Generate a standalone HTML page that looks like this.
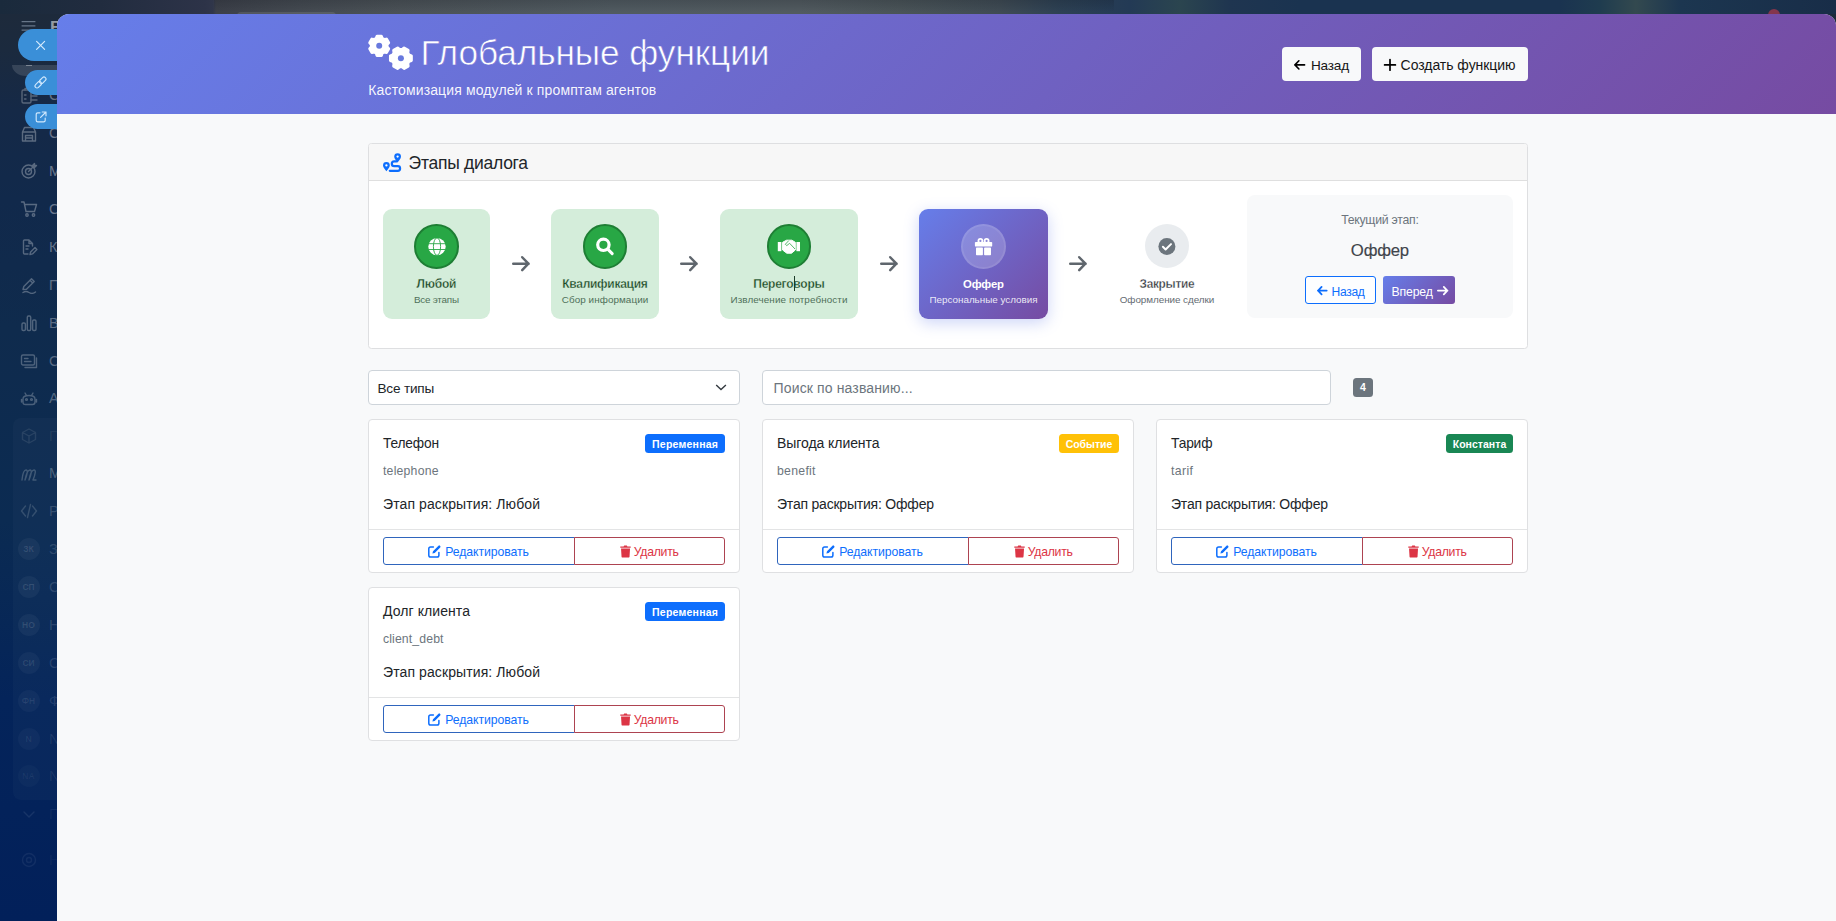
<!DOCTYPE html>
<html lang="ru">
<head>
<meta charset="utf-8">
<title>Глобальные функции</title>
<style>
*{box-sizing:border-box;margin:0;padding:0}
html,body{width:1836px;height:921px;overflow:hidden}
body{position:relative;font-family:"Liberation Sans",sans-serif;font-size:14px;color:#212529;
background:linear-gradient(180deg,#1e2a3a 0px,#1b2a3e 50px,#152947 110px,#11294b 200px,#0f2b4d 330px,#0b2b52 520px,#04245a 700px,#02205a 921px)}
.abs{position:absolute;white-space:nowrap;line-height:1}
#topglow{position:absolute;left:0;top:0;width:1836px;height:14px;background:linear-gradient(90deg,#1a2a3c 0,#212c3f 100px,#2d3348 205px,#30364a 213px,#3c4049 216px,#444a51 300px,#4b5257 400px,#515b61 612px,#525b60 800px,#4a5458 900px,#3f4b54 1000px,#2d4154 1060px,#233a55 1130px,#2b454f 1180px,#1f3550 1230px,#1a3350 1300px,#1a3350 1560px,#1f3c4f 1600px,#33494f 1636px,#1c3650 1680px,#182d48 1836px)}
#panel{position:absolute;left:57px;top:14px;width:1779px;height:907px;background:#f8f9fa;border-radius:12px 12px 0 0;overflow:hidden}
#hdr{position:absolute;left:0;top:0;width:1779px;height:100px;background:linear-gradient(135deg,#667eea 0%,#764ba2 100%)}
</style>
</head>
<body>
<div id="topglow"></div>
<div class="abs" style="left:214px;top:0px;width:900px;height:14px;background:linear-gradient(180deg,rgba(10,14,22,.17) 0,rgba(10,14,22,.09) 6px,rgba(10,14,22,0) 12px)"></div>
<div class="abs" style="left:237px;top:11.5px;width:99px;height:6px;border-radius:4px 4px 0 0;background:rgba(255,255,255,.10)"></div>
<div class="abs" style="left:1767.5px;top:9.3px;width:12px;height:12px;border-radius:50%;background:#a8384c;opacity:.75"></div>
<svg class="abs" style="left:20px;top:18px;" width="18" height="16" viewBox="20 18 18 16"><path d="M21.6 21.6H35.4M21.6 25.9H35.4M21.6 30.2H35.4" stroke="#cfe0f2" stroke-opacity=".42" stroke-width="1.3" fill="none"/></svg>
<span class="abs" style="left:50.00px;top:19.00px;font-size:17px;font-weight:700;color:rgba(255,255,255,.55);">Б</span>
<div class="abs" style="left:11.5px;top:65px;width:60px;height:11px;border-radius:0 0 0 14px/0 0 0 11px;background:rgba(255,255,255,.13)"></div>
<div class="abs" style="left:26px;top:65px;width:6px;height:1px;background:rgba(255,255,255,.35)"></div>
<svg class="abs" style="left:19.5px;top:86.5px;opacity:0.28" width="18" height="18" viewBox="0 0 18 18"><rect x="2" y="3" width="9" height="13" rx="1.5" stroke="#fff" fill="none" stroke-width="1.4" stroke-linecap="round" stroke-linejoin="round"/><path d="M5 3V1.5H8V3M4.5 8H6M4.5 12H6M11 9H17M11 13H17M14 5H17" stroke="#fff" fill="none" stroke-width="1.4" stroke-linecap="round" stroke-linejoin="round"/></svg>
<span class="abs" style="left:49.00px;top:88.00px;font-size:14.5px;color:rgba(255,255,255,0.36);">С</span>
<svg class="abs" style="left:19.5px;top:124.5px;opacity:0.3" width="18" height="18" viewBox="0 0 18 18"><path d="M2.5 16V7L4.5 2.5H13.5L15.5 7V16ZM2.5 7H15.5M5.5 16V10.5H12.5V16M5.5 13H12.5" stroke="#fff" fill="none" stroke-width="1.4" stroke-linecap="round" stroke-linejoin="round"/></svg>
<span class="abs" style="left:49.00px;top:126.00px;font-size:14.5px;color:rgba(255,255,255,0.38);">С</span>
<svg class="abs" style="left:19.5px;top:162px;opacity:0.3" width="18" height="18" viewBox="0 0 18 18"><circle cx="8.5" cy="9.5" r="6.5" stroke="#fff" fill="none" stroke-width="1.4" stroke-linecap="round" stroke-linejoin="round"/><circle cx="8.5" cy="9.5" r="3" stroke="#fff" fill="none" stroke-width="1.4" stroke-linecap="round" stroke-linejoin="round"/><path d="M8.5 9.5L14.5 3.5M12.5 3.5L14.5 1.5V3.5H16.5L14.5 5.5" stroke="#fff" fill="none" stroke-width="1.4" stroke-linecap="round" stroke-linejoin="round"/></svg>
<span class="abs" style="left:49.00px;top:164.00px;font-size:14.5px;color:rgba(255,255,255,0.38);">М</span>
<svg class="abs" style="left:19.5px;top:200px;opacity:0.3" width="18" height="18" viewBox="0 0 18 18"><path d="M1.5 2H4L6 11.5H14.5L16.5 4.5H4.6" stroke="#fff" fill="none" stroke-width="1.4" stroke-linecap="round" stroke-linejoin="round"/><circle cx="7" cy="15" r="1.2" stroke="#fff" fill="none" stroke-width="1.4" stroke-linecap="round" stroke-linejoin="round"/><circle cx="13.5" cy="15" r="1.2" stroke="#fff" fill="none" stroke-width="1.4" stroke-linecap="round" stroke-linejoin="round"/></svg>
<span class="abs" style="left:49.00px;top:202.00px;font-size:14.5px;color:rgba(255,255,255,0.38);">С</span>
<svg class="abs" style="left:19.5px;top:237.5px;opacity:0.29" width="18" height="18" viewBox="0 0 18 18"><path d="M12.5 8V5.5L9 2H4.5Q3.5 2 3.5 3V15Q3.5 16 4.5 16H8M9 2V5.5H12.5M6 8H9M6 11H8" stroke="#fff" fill="none" stroke-width="1.4" stroke-linecap="round" stroke-linejoin="round"/><path d="M10 16.5L10.6 14L15 9.6L16.9 11.5L12.5 15.9Z" stroke="#fff" fill="none" stroke-width="1.4" stroke-linecap="round" stroke-linejoin="round"/></svg>
<span class="abs" style="left:49.00px;top:240.00px;font-size:14.5px;color:rgba(255,255,255,0.36);">К</span>
<svg class="abs" style="left:19.5px;top:276px;opacity:0.28" width="18" height="18" viewBox="0 0 18 18"><path d="M3 13.5L3.8 10.5L11.5 2.8L14.2 5.5L6.5 13.2ZM10 4.3L12.7 7" stroke="#fff" fill="none" stroke-width="1.4" stroke-linecap="round" stroke-linejoin="round"/><path d="M3 16.5Q6 14.5 9 16.5T15.5 16" stroke="#fff" fill="none" stroke-width="1.4" stroke-linecap="round" stroke-linejoin="round"/></svg>
<span class="abs" style="left:49.00px;top:278.00px;font-size:14.5px;color:rgba(255,255,255,0.34);">П</span>
<svg class="abs" style="left:19.5px;top:314px;opacity:0.27" width="18" height="18" viewBox="0 0 18 18"><rect x="2" y="9" width="3.4" height="7.5" rx="1.2" stroke="#fff" fill="none" stroke-width="1.4" stroke-linecap="round" stroke-linejoin="round"/><rect x="7.3" y="2" width="3.4" height="14.5" rx="1.2" stroke="#fff" fill="none" stroke-width="1.4" stroke-linecap="round" stroke-linejoin="round"/><rect x="12.6" y="6" width="3.4" height="10.5" rx="1.2" stroke="#fff" fill="none" stroke-width="1.4" stroke-linecap="round" stroke-linejoin="round"/></svg>
<span class="abs" style="left:49.00px;top:316.00px;font-size:14.5px;color:rgba(255,255,255,0.33);">В</span>
<svg class="abs" style="left:19.5px;top:351.5px;opacity:0.26" width="18" height="18" viewBox="0 0 18 18"><rect x="1.5" y="3" width="13" height="10" rx="1.5" stroke="#fff" fill="none" stroke-width="1.4" stroke-linecap="round" stroke-linejoin="round"/><path d="M4.5 6.5H8M4.5 9.5H11M16.5 6V15.5H5" stroke="#fff" fill="none" stroke-width="1.4" stroke-linecap="round" stroke-linejoin="round"/></svg>
<span class="abs" style="left:49.00px;top:354.00px;font-size:14.5px;color:rgba(255,255,255,0.31);">С</span>
<svg class="abs" style="left:19.5px;top:389px;opacity:0.25" width="18" height="18" viewBox="0 0 18 18"><path d="M3 10Q3 6.5 9 6.5T15 10V13Q15 15.5 12.5 15.5H5.5Q3 15.5 3 13ZM5 4L6.5 6.5M13 4L11.5 6.5M1.5 10.5V13M16.5 10.5V13" stroke="#fff" fill="none" stroke-width="1.4" stroke-linecap="round" stroke-linejoin="round"/><circle cx="6.5" cy="10.5" r=".9" stroke="#fff" fill="none" stroke-width="1.4" stroke-linecap="round" stroke-linejoin="round"/><circle cx="11.5" cy="10.5" r=".9" stroke="#fff" fill="none" stroke-width="1.4" stroke-linecap="round" stroke-linejoin="round"/></svg>
<span class="abs" style="left:49.00px;top:391.00px;font-size:14.5px;color:rgba(255,255,255,0.3);">А</span>
<svg class="abs" style="left:19.5px;top:427px;opacity:0.09" width="18" height="18" viewBox="0 0 18 18"><path d="M9 2L15.5 5.5V12.5L9 16L2.5 12.5V5.5ZM2.5 5.5L9 9L15.5 5.5M9 9V16" stroke="#fff" fill="none" stroke-width="1.4" stroke-linecap="round" stroke-linejoin="round"/></svg>
<span class="abs" style="left:49.00px;top:429.00px;font-size:14.5px;color:rgba(255,255,255,0.07);">П</span>
<svg class="abs" style="left:19.5px;top:464.5px;opacity:0.2" width="18" height="18" viewBox="0 0 18 18"><path d="M2 15Q3 5 6 5T5 15Q7 5 10 5T9 15Q11 5 14 5T13 15H16" stroke="#fff" fill="none" stroke-width="1.4" stroke-linecap="round" stroke-linejoin="round"/></svg>
<span class="abs" style="left:49.00px;top:466.00px;font-size:14.5px;color:rgba(255,255,255,0.26);">М</span>
<svg class="abs" style="left:19.5px;top:502px;opacity:0.15" width="18" height="18" viewBox="0 0 18 18"><path d="M5.5 4L1.5 9L5.5 14M12.5 4L16.5 9L12.5 14M10.5 2.5L7.5 15.5" stroke="#fff" fill="none" stroke-width="1.4" stroke-linecap="round" stroke-linejoin="round"/></svg>
<span class="abs" style="left:49.00px;top:504.00px;font-size:14.5px;color:rgba(255,255,255,0.18);">Р</span>
<div class="abs" style="left:13px;top:418px;width:50px;height:382px;background:rgba(255,255,255,.022);border-radius:8px 0 0 8px"></div>
<div class="abs" style="left:17.5px;top:538px;width:22px;height:22px;border-radius:50%;background:rgba(255,255,255,0.045)"></div>
<span class="abs" style="left:23.24px;top:545.00px;font-size:8.5px;font-weight:700;color:rgba(255,255,255,0.13);">ЗК</span>
<span class="abs" style="left:49.00px;top:542.00px;font-size:14.5px;color:rgba(255,255,255,0.15);">З</span>
<div class="abs" style="left:17.5px;top:576px;width:22px;height:22px;border-radius:50%;background:rgba(255,255,255,0.045)"></div>
<span class="abs" style="left:22.38px;top:583.00px;font-size:8.5px;font-weight:700;color:rgba(255,255,255,0.13);">СП</span>
<span class="abs" style="left:49.00px;top:580.00px;font-size:14.5px;color:rgba(255,255,255,0.15);">С</span>
<div class="abs" style="left:17.5px;top:614px;width:22px;height:22px;border-radius:50%;background:rgba(255,255,255,0.045)"></div>
<span class="abs" style="left:22.12px;top:621.00px;font-size:8.5px;font-weight:700;color:rgba(255,255,255,0.13);">НО</span>
<span class="abs" style="left:49.00px;top:618.00px;font-size:14.5px;color:rgba(255,255,255,0.15);">Н</span>
<div class="abs" style="left:17.5px;top:652px;width:22px;height:22px;border-radius:50%;background:rgba(255,255,255,0.04)"></div>
<span class="abs" style="left:22.38px;top:659.00px;font-size:8.5px;font-weight:700;color:rgba(255,255,255,0.11);">СИ</span>
<span class="abs" style="left:49.00px;top:656.00px;font-size:14.5px;color:rgba(255,255,255,0.13);">С</span>
<div class="abs" style="left:17.5px;top:690px;width:22px;height:22px;border-radius:50%;background:rgba(255,255,255,0.035)"></div>
<span class="abs" style="left:21.80px;top:697.00px;font-size:8.5px;font-weight:700;color:rgba(255,255,255,0.09);">ФН</span>
<span class="abs" style="left:49.00px;top:694.00px;font-size:14.5px;color:rgba(255,255,255,0.11);">Ф</span>
<div class="abs" style="left:17.5px;top:727.5px;width:22px;height:22px;border-radius:50%;background:rgba(255,255,255,0.03)"></div>
<span class="abs" style="left:25.43px;top:735.00px;font-size:8.5px;font-weight:700;color:rgba(255,255,255,0.07);">N</span>
<span class="abs" style="left:49.00px;top:732.00px;font-size:14.5px;color:rgba(255,255,255,0.09);">N</span>
<div class="abs" style="left:17.5px;top:765px;width:22px;height:22px;border-radius:50%;background:rgba(255,255,255,0.025)"></div>
<span class="abs" style="left:22.36px;top:772.00px;font-size:8.5px;font-weight:700;color:rgba(255,255,255,0.06);">NA</span>
<span class="abs" style="left:49.00px;top:769.00px;font-size:14.5px;color:rgba(255,255,255,0.08);">N</span>
<svg class="abs" style="left:19.5px;top:805px;opacity:.08" width="18" height="18" viewBox="0 0 18 18"><path d="M4 7L9 12L14 7" stroke="#fff" fill="none" stroke-width="1.4" stroke-linecap="round" stroke-linejoin="round"/></svg>
<span class="abs" style="left:49.00px;top:807.00px;font-size:14.5px;color:rgba(255,255,255,.06);">П</span>
<svg class="abs" style="left:19.5px;top:851px;opacity:.06" width="18" height="18" viewBox="0 0 18 18"><circle cx="9" cy="9" r="6.5" stroke="#fff" fill="none" stroke-width="1.4" stroke-linecap="round" stroke-linejoin="round"/><circle cx="9" cy="9" r="2.5" stroke="#fff" fill="none" stroke-width="1.4" stroke-linecap="round" stroke-linejoin="round"/></svg>
<span class="abs" style="left:49.00px;top:853.00px;font-size:14.5px;color:rgba(255,255,255,.05);">Н</span>
<div class="abs" style="left:18px;top:29px;width:50px;height:32px;border-radius:16px 0 0 16px;background:#3a8fd8"></div>
<svg class="abs" style="left:34.5px;top:40px;" width="11" height="11" viewBox="0 0 11 11"><path d="M1.6 1.3L9.6 9.3M9.6 1.3L1.6 9.3" stroke="#dff0ff" stroke-width="1.15" fill="none" stroke-linecap="round" opacity=".95"/></svg>
<div class="abs" style="left:25px;top:70px;width:45px;height:25px;border-radius:12.5px 0 0 12.5px;background:#3a8fd8"></div>
<svg class="abs" style="left:34px;top:76px;" width="13" height="13" viewBox="0 0 13 13"><g transform="rotate(-45 6.5 6.5)" fill="none" stroke="#d9edff" stroke-width="1.15" opacity=".95"><rect x="-0.4" y="4.5" width="7.4" height="4" rx="2"/><rect x="6" y="4.5" width="7.4" height="4" rx="2"/></g></svg>
<div class="abs" style="left:25px;top:104px;width:45px;height:25px;border-radius:12.5px 0 0 12.5px;background:#3a8fd8"></div>
<svg class="abs" style="left:35px;top:111px;" width="12" height="12" viewBox="0 0 12 12"><path d="M5 1.8H2.8Q1.2 1.8 1.2 3.4V9.2Q1.2 10.8 2.8 10.8H8.6Q10.2 10.8 10.2 9.2V7M7.2 1H11V4.8M11 1L5.6 6.4" fill="none" stroke="#d9edff" stroke-width="1.15" stroke-linecap="round" stroke-linejoin="round" opacity=".95"/></svg>
<div id="panel"><div id="hdr"></div></div>
<svg class="abs" style="left:360px;top:25px;" width="70" height="60" viewBox="360 25 70 60"><path d="M382.14 53.24L381.36 55.46L377.04 55.46L376.26 53.24L374.23 52.07L371.91 52.50L369.75 48.76L371.29 46.97L371.29 44.63L369.75 42.84L371.91 39.10L374.23 39.53L376.26 38.36L377.04 36.14L381.36 36.14L382.14 38.36L384.17 39.53L386.49 39.10L388.65 42.84L387.11 44.63L387.11 46.97L388.65 48.76L386.49 52.50L384.17 52.07Z" fill="#fff" stroke="#fff" stroke-width="3" stroke-linejoin="round"/><circle cx="379.2" cy="45.8" r="3.0" fill="#6879de"/><path d="M408.99 55.00L411.34 55.87L411.34 60.53L408.99 61.40L407.72 63.60L408.14 66.08L404.10 68.41L402.17 66.81L399.63 66.81L397.70 68.41L393.66 66.08L394.08 63.60L392.81 61.40L390.46 60.53L390.46 55.87L392.81 55.00L394.08 52.80L393.66 50.32L397.70 47.99L399.63 49.59L402.17 49.59L404.10 47.99L408.14 50.32L407.72 52.80Z" fill="#fff" stroke="#fff" stroke-width="3" stroke-linejoin="round"/><circle cx="400.9" cy="58.2" r="3.0" fill="#6879de"/></svg>
<span class="abs" style="left:420.50px;top:35.00px;font-size:35.26px;color:#fff;letter-spacing:-0.088px;-webkit-text-stroke:.6px rgb(107,111,213);">Глобальные функции</span>
<span class="abs" style="left:368.30px;top:83.00px;font-size:14px;color:rgba(255,255,255,.95);letter-spacing:0.129px;">Кастомизация модулей к промптам агентов</span>
<div class="abs" style="left:1282px;top:47px;width:79px;height:34px;border-radius:4px;background:#f8f9fa"></div>
<svg class="abs" style="left:1291.8px;top:57.6px;" width="15.400000000000091" height="13.8" viewBox="0 0 15.400000000000091 13.8"><path d="M12.60 6.90H2.80M6.90 2.80L2.96 6.90L6.90 11.00" fill="none" stroke="#000" stroke-width="1.6" stroke-linecap="round" stroke-linejoin="round"/></svg>
<span class="abs" style="left:1310.90px;top:59.00px;font-size:13.6px;color:#161616;letter-spacing:-0.188px;">Назад</span>
<div class="abs" style="left:1372px;top:47px;width:156px;height:34px;border-radius:4px;background:#f8f9fa"></div>
<svg class="abs" style="left:1383px;top:58px;" width="14" height="14" viewBox="0 0 14 14"><path d="M7 1.6V12.2M1.6 6.9H12.4" stroke="#000" stroke-width="1.7" stroke-linecap="round" fill="none"/></svg>
<span class="abs" style="left:1400.60px;top:58.00px;font-size:14px;color:#161616;letter-spacing:-0.047px;">Создать функцию</span>
<div class="abs" style="left:368px;top:143px;width:1160px;height:206px;background:#fff;border:1px solid #dedfe1;border-radius:3.5px"></div>
<div class="abs" style="left:369px;top:144px;width:1158px;height:37px;background:#f7f7f7;border-bottom:1px solid #dfdfdf;border-radius:3px 3px 0 0"></div>
<svg class="abs" style="left:382px;top:152px;" width="20" height="20" viewBox="382 152 20 20"><path d="M386.4 171.2C385.4 169.6 383 167.6 383 165.5A3.4 3.4 0 0 1 389.8 165.5C389.8 167.6 387.4 169.6 386.4 171.2Z" fill="#0d6efd"/><circle cx="386.4" cy="165.4" r="1.15" fill="#fff"/><path d="M397.6 162.4C396.6 160.8 394.2 158.8 394.2 156.7A3.4 3.4 0 0 1 401 156.7C401 158.8 398.6 160.8 397.6 162.4Z" fill="#0d6efd"/><circle cx="397.6" cy="156.6" r="1.15" fill="#fff"/><path d="M396.6 161.4H394.2A2.4 2.4 0 0 0 394.2 166.2H397.8A2.3 2.3 0 0 1 397.8 170.8H389.8" fill="none" stroke="#0d6efd" stroke-width="2.2" stroke-linecap="round"/></svg>
<span class="abs" style="left:408.60px;top:155.00px;font-size:17.5px;color:#212529;letter-spacing:-0.262px;">Этапы диалога</span>
<div class="abs" style="left:383px;top:209px;width:107px;height:110px;background:#d4edda;border-radius:9px"></div>
<div class="abs" style="left:414.2px;top:224px;width:44.6px;height:44.6px;border-radius:50%;background:#28a745;border:2px solid #1e7e34"></div>
<span class="abs" style="left:416.50px;top:278.00px;font-size:12.03px;font-weight:700;color:#1c4526;letter-spacing:-0.172px;-webkit-text-stroke:.3px #d4edda;">Любой</span>
<span class="abs" style="left:414.00px;top:295.00px;font-size:9.9px;color:#4f7059;letter-spacing:-0.242px;">Все этапы</span>
<div class="abs" style="left:551px;top:209px;width:108px;height:110px;background:#d4edda;border-radius:9px"></div>
<div class="abs" style="left:582.7px;top:224px;width:44.6px;height:44.6px;border-radius:50%;background:#28a745;border:2px solid #1e7e34"></div>
<span class="abs" style="left:562.25px;top:278.00px;font-size:12.03px;font-weight:700;color:#1c4526;letter-spacing:-0.287px;-webkit-text-stroke:.3px #d4edda;">Квалификация</span>
<span class="abs" style="left:561.75px;top:295.00px;font-size:9.9px;color:#4f7059;letter-spacing:0.067px;">Сбор информации</span>
<div class="abs" style="left:720px;top:209px;width:138px;height:110px;background:#d4edda;border-radius:9px"></div>
<div class="abs" style="left:766.7px;top:224px;width:44.6px;height:44.6px;border-radius:50%;background:#28a745;border:2px solid #1e7e34"></div>
<span class="abs" style="left:753.25px;top:278.00px;font-size:12.03px;font-weight:700;color:#1c4526;letter-spacing:-0.245px;-webkit-text-stroke:.3px #d4edda;">Переговоры</span>
<span class="abs" style="left:730.51px;top:295.00px;font-size:9.9px;color:#4f7059;letter-spacing:0.094px;">Извлечение потребности</span>
<div class="abs" style="left:919px;top:209px;width:129px;height:110px;background:linear-gradient(135deg,#667eea 0%,#764ba2 100%);border-radius:9px;box-shadow:0 4px 15px rgba(102,126,234,.33)"></div>
<div class="abs" style="left:961.0px;top:224px;width:45px;height:45px;border-radius:50%;background:rgba(255,255,255,.2);border:2px solid rgba(255,255,255,.08)"></div>
<span class="abs" style="left:963.00px;top:279.00px;font-size:11.32px;font-weight:700;color:#fff;letter-spacing:-0.164px;">Оффер</span>
<span class="abs" style="left:929.50px;top:295.00px;font-size:9.9px;color:rgba(255,255,255,.88);letter-spacing:-0.026px;">Персональные условия</span>
<div class="abs" style="left:1145px;top:224.2px;width:44px;height:44px;border-radius:50%;background:#e9ecef"></div>
<span class="abs" style="left:1139.50px;top:279.00px;font-size:11.85px;font-weight:700;color:#33373b;letter-spacing:-0.279px;-webkit-text-stroke:.3px #fff;">Закрытие</span>
<span class="abs" style="left:1119.75px;top:295.00px;font-size:9.9px;color:#646b72;letter-spacing:-0.062px;">Оформление сделки</span>
<div class="abs" style="left:794px;top:275.5px;width:1px;height:15px;background:#1c3b28"></div>
<svg class="abs" style="left:509.7px;top:254.3px;" width="21.900000000000034" height="19.4" viewBox="0 0 21.900000000000034 19.4"><path d="M3.25 9.70H18.65M12.20 3.25L18.40 9.70L12.20 16.15" fill="none" stroke="#5f666d" stroke-width="2.5" stroke-linecap="round" stroke-linejoin="round"/></svg>
<svg class="abs" style="left:678.3px;top:254.3px;" width="21.899999999999977" height="19.4" viewBox="0 0 21.899999999999977 19.4"><path d="M3.25 9.70H18.65M12.20 3.25L18.40 9.70L12.20 16.15" fill="none" stroke="#5f666d" stroke-width="2.5" stroke-linecap="round" stroke-linejoin="round"/></svg>
<svg class="abs" style="left:877.5px;top:254.3px;" width="21.899999999999977" height="19.4" viewBox="0 0 21.899999999999977 19.4"><path d="M3.25 9.70H18.65M12.20 3.25L18.40 9.70L12.20 16.15" fill="none" stroke="#5f666d" stroke-width="2.5" stroke-linecap="round" stroke-linejoin="round"/></svg>
<svg class="abs" style="left:1067.2px;top:254.3px;" width="21.90000000000009" height="19.4" viewBox="0 0 21.90000000000009 19.4"><path d="M3.25 9.70H18.65M12.20 3.25L18.40 9.70L12.20 16.15" fill="none" stroke="#5f666d" stroke-width="2.5" stroke-linecap="round" stroke-linejoin="round"/></svg>
<svg class="abs" style="left:427px;top:237px;" width="20" height="20" viewBox="427 237 20 20"><circle cx="437" cy="246.6" r="8.7" fill="#fff"/><g fill="none" stroke="#28a745" stroke-width=".9"><ellipse cx="437" cy="246.6" rx="3.6" ry="8.7"/><path d="M428.3 243.7H445.7M428.3 249.5H445.7"/></g></svg>
<svg class="abs" style="left:594px;top:235px;" width="22" height="22" viewBox="594 235 22 22"><circle cx="603.4" cy="244.8" r="5.7" fill="none" stroke="#fff" stroke-width="3.2"/><path d="M608.2 249.6L612.2 253.6" stroke="#fff" stroke-width="3" stroke-linecap="round"/></svg>
<svg class="abs" style="left:776px;top:236px;" width="26" height="20" viewBox="776 236 26 20"><rect x="777.8" y="242" width="3.6" height="9.2" fill="#fff"/><rect x="796.4" y="242" width="3.6" height="9.2" fill="#fff"/><path d="M782.6 242.3L786.6 240.2H791.8L795.3 242.3V250L791.5 253.2H786.8L782.6 250Z" fill="#fff" stroke="#fff" stroke-width="1" stroke-linejoin="round"/><path d="M788.8 240.6L785.3 244.3L786.8 245.6L789.6 243.3L795 249" fill="none" stroke="#28a745" stroke-width=".8"/></svg>
<svg class="abs" style="left:973px;top:236px;" width="22" height="22" viewBox="973 236 22 22"><circle cx="980.4" cy="240.9" r="2.0" fill="none" stroke="#fff" stroke-width="1.8"/><circle cx="986.6" cy="240.9" r="2.0" fill="none" stroke="#fff" stroke-width="1.8"/><rect x="974.9" y="241.9" width="17.3" height="4.7" rx=".9" fill="#fff"/><rect x="976" y="247.6" width="6.9" height="7.7" rx=".7" fill="#fff"/><rect x="984.1" y="247.6" width="6.9" height="7.7" rx=".7" fill="#fff"/></svg>
<svg class="abs" style="left:1157px;top:237px;" width="20" height="20" viewBox="1157 237 20 20"><circle cx="1166.9" cy="246.5" r="8.5" fill="#6c757d"/><path d="M1162.9 246.8L1165.6 249.5L1171 244.1" fill="none" stroke="#fff" stroke-width="2" stroke-linecap="round" stroke-linejoin="round"/></svg>
<div class="abs" style="left:1247px;top:195px;width:266px;height:123px;background:#f8f9fa;border-radius:8px"></div>
<span class="abs" style="left:1341.15px;top:214.00px;font-size:12.25px;color:#6c757d;letter-spacing:-0.25px;">Текущий этап:</span>
<span class="abs" style="left:1350.85px;top:243.00px;font-size:16.73px;color:#3f444a;letter-spacing:-0.206px;-webkit-text-stroke:.15px #3f444a;">Оффер</span>
<div class="abs" style="left:1305px;top:276px;width:71px;height:28px;border:1px solid #0d6efd;border-radius:3px;background:#fdfeff"></div>
<svg class="abs" style="left:1314.6px;top:284.29999999999995px;" width="14.600000000000136" height="13.2" viewBox="0 0 14.600000000000136 13.2"><path d="M11.70 6.60H2.90M6.60 2.90L3.08 6.60L6.60 10.30" fill="none" stroke="#0d6efd" stroke-width="1.8" stroke-linecap="round" stroke-linejoin="round"/></svg>
<span class="abs" style="left:1331.50px;top:286.00px;font-size:12.07px;color:#0d6efd;letter-spacing:-0.291px;">Назад</span>
<div class="abs" style="left:1383px;top:276px;width:72px;height:28px;border-radius:3px;background:linear-gradient(135deg,#667eea 0%,#764ba2 100%)"></div>
<span class="abs" style="left:1391.50px;top:286.00px;font-size:12.25px;color:#fff;letter-spacing:-0.145px;">Вперед</span>
<svg class="abs" style="left:1434.6px;top:284.29999999999995px;" width="15.400000000000091" height="13.2" viewBox="0 0 15.400000000000091 13.2"><path d="M2.90 6.60H12.50M8.80 2.90L12.32 6.60L8.80 10.30" fill="none" stroke="#fff" stroke-width="1.8" stroke-linecap="round" stroke-linejoin="round"/></svg>
<div class="abs" style="left:368px;top:370px;width:372px;height:35px;background:#fff;border:1px solid #ced4da;border-radius:4px"></div>
<span class="abs" style="left:377.50px;top:382.00px;font-size:13.58px;color:#212529;letter-spacing:-0.185px;">Все типы</span>
<svg class="abs" style="left:714px;top:383px;" width="14" height="9" viewBox="714 383 14 9"><path d="M716.2 385.1L721 389.6L725.9 385.1" fill="none" stroke="#343a40" stroke-width="1.4" stroke-linecap="butt" stroke-linejoin="miter"/></svg>
<div class="abs" style="left:762px;top:370px;width:569px;height:35px;background:#fff;border:1px solid #ced4da;border-radius:4px"></div>
<span class="abs" style="left:773.60px;top:381.00px;font-size:14px;color:#6c757d;letter-spacing:0.131px;">Поиск по названию...</span>
<div class="abs" style="left:1353px;top:378.4px;width:20px;height:18.2px;background:#6c757d;border-radius:3.5px"></div>
<span class="abs" style="left:1360.08px;top:382.00px;font-size:10.5px;font-weight:700;color:#fff;">4</span>
<div class="abs" style="left:368px;top:419px;width:372px;height:154px;background:#fff;border:1px solid #dfe0e2;border-radius:4px"></div>
<div class="abs" style="left:369px;top:529px;width:370px;height:1px;background:#e3e4e5"></div>
<span class="abs" style="left:383.00px;top:437.00px;font-size:13.79px;color:#212529;letter-spacing:-0.195px;">Телефон</span>
<div class="abs" style="left:645px;top:433.7px;width:80px;height:19px;background:#0d6efd;border-radius:3.5px"></div>
<span class="abs" style="left:652.00px;top:439.00px;font-size:10.5px;font-weight:700;color:#fff;letter-spacing:0.248px;">Переменная</span>
<span class="abs" style="left:383.00px;top:465.00px;font-size:12.25px;color:#6c757d;letter-spacing:0.209px;">telephone</span>
<span class="abs" style="left:383.00px;top:497.00px;font-size:14px;color:#212529;letter-spacing:0.098px;">Этап раскрытия: Любой</span>
<div class="abs" style="left:383px;top:537px;width:192px;height:28px;border:1px solid #2f65bd;border-radius:3px 0 0 3px;background:#fff"></div>
<div class="abs" style="left:574px;top:537px;width:151px;height:28px;border:1px solid #ad4351;border-radius:0 3px 3px 0;background:#fff"></div>
<svg class="abs" style="left:427.2px;top:543.8px;" width="15" height="15" viewBox="-1 -1 15 15"><path d="M5.4 1.9H2.6Q.8 1.9 .8 3.7V10.2Q.8 12 2.6 12H9.1Q10.9 12 10.9 10.2V7.6" fill="none" stroke="#0d6efd" stroke-width="1.5" stroke-linecap="round"/><path d="M4.4 8.6L5 6.2L10.5 .7Q11.2 0 11.9 .7L12.2 1Q12.9 1.7 12.2 2.4L6.7 7.9Z" fill="#0d6efd"/></svg>
<span class="abs" style="left:445.20px;top:546.00px;font-size:12.25px;color:#0d6efd;letter-spacing:-0.085px;">Редактировать</span>
<svg class="abs" style="left:619.6px;top:544.6px;" width="12" height="13" viewBox="0 0 12 13"><path d="M.3 1.5H3.6L4.2 .5H6.8L7.4 1.5H10.7V2.8H.3Z" fill="#dc3545"/><path d="M1 3.6H10L9.5 11.4Q9.4 12.6 8.2 12.6H2.8Q1.6 12.6 1.5 11.4Z" fill="#dc3545"/></svg>
<span class="abs" style="left:633.80px;top:546.00px;font-size:12.25px;color:#dc3545;letter-spacing:-0.28px;">Удалить</span>
<div class="abs" style="left:762px;top:419px;width:372px;height:154px;background:#fff;border:1px solid #dfe0e2;border-radius:4px"></div>
<div class="abs" style="left:763px;top:529px;width:370px;height:1px;background:#e3e4e5"></div>
<span class="abs" style="left:777.00px;top:436.00px;font-size:14px;color:#212529;letter-spacing:-0.066px;">Выгода клиента</span>
<div class="abs" style="left:1059px;top:433.7px;width:60px;height:19px;background:#ffc107;border-radius:3.5px"></div>
<span class="abs" style="left:1065.75px;top:439.00px;font-size:10.5px;font-weight:700;color:#fff;letter-spacing:-0.065px;">Событие</span>
<span class="abs" style="left:777.00px;top:465.00px;font-size:12.25px;color:#6c757d;letter-spacing:0.286px;">benefit</span>
<span class="abs" style="left:777.00px;top:497.00px;font-size:14px;color:#212529;letter-spacing:-0.211px;">Этап раскрытия: Оффер</span>
<div class="abs" style="left:777px;top:537px;width:192px;height:28px;border:1px solid #2f65bd;border-radius:3px 0 0 3px;background:#fff"></div>
<div class="abs" style="left:968px;top:537px;width:151px;height:28px;border:1px solid #ad4351;border-radius:0 3px 3px 0;background:#fff"></div>
<svg class="abs" style="left:821.2px;top:543.8px;" width="15" height="15" viewBox="-1 -1 15 15"><path d="M5.4 1.9H2.6Q.8 1.9 .8 3.7V10.2Q.8 12 2.6 12H9.1Q10.9 12 10.9 10.2V7.6" fill="none" stroke="#0d6efd" stroke-width="1.5" stroke-linecap="round"/><path d="M4.4 8.6L5 6.2L10.5 .7Q11.2 0 11.9 .7L12.2 1Q12.9 1.7 12.2 2.4L6.7 7.9Z" fill="#0d6efd"/></svg>
<span class="abs" style="left:839.20px;top:546.00px;font-size:12.25px;color:#0d6efd;letter-spacing:-0.085px;">Редактировать</span>
<svg class="abs" style="left:1013.6px;top:544.6px;" width="12" height="13" viewBox="0 0 12 13"><path d="M.3 1.5H3.6L4.2 .5H6.8L7.4 1.5H10.7V2.8H.3Z" fill="#dc3545"/><path d="M1 3.6H10L9.5 11.4Q9.4 12.6 8.2 12.6H2.8Q1.6 12.6 1.5 11.4Z" fill="#dc3545"/></svg>
<span class="abs" style="left:1027.80px;top:546.00px;font-size:12.25px;color:#dc3545;letter-spacing:-0.28px;">Удалить</span>
<div class="abs" style="left:1156px;top:419px;width:372px;height:154px;background:#fff;border:1px solid #dfe0e2;border-radius:4px"></div>
<div class="abs" style="left:1157px;top:529px;width:370px;height:1px;background:#e3e4e5"></div>
<span class="abs" style="left:1171.00px;top:437.00px;font-size:13.79px;color:#212529;letter-spacing:-0.168px;">Тариф</span>
<div class="abs" style="left:1446px;top:433.7px;width:67px;height:19px;background:#198754;border-radius:3.5px"></div>
<span class="abs" style="left:1452.75px;top:439.00px;font-size:10.5px;font-weight:700;color:#fff;letter-spacing:0.023px;">Константа</span>
<span class="abs" style="left:1171.00px;top:465.00px;font-size:12.25px;color:#6c757d;letter-spacing:0.395px;">tarif</span>
<span class="abs" style="left:1171.00px;top:497.00px;font-size:14px;color:#212529;letter-spacing:-0.211px;">Этап раскрытия: Оффер</span>
<div class="abs" style="left:1171px;top:537px;width:192px;height:28px;border:1px solid #2f65bd;border-radius:3px 0 0 3px;background:#fff"></div>
<div class="abs" style="left:1362px;top:537px;width:151px;height:28px;border:1px solid #ad4351;border-radius:0 3px 3px 0;background:#fff"></div>
<svg class="abs" style="left:1215.2px;top:543.8px;" width="15" height="15" viewBox="-1 -1 15 15"><path d="M5.4 1.9H2.6Q.8 1.9 .8 3.7V10.2Q.8 12 2.6 12H9.1Q10.9 12 10.9 10.2V7.6" fill="none" stroke="#0d6efd" stroke-width="1.5" stroke-linecap="round"/><path d="M4.4 8.6L5 6.2L10.5 .7Q11.2 0 11.9 .7L12.2 1Q12.9 1.7 12.2 2.4L6.7 7.9Z" fill="#0d6efd"/></svg>
<span class="abs" style="left:1233.20px;top:546.00px;font-size:12.25px;color:#0d6efd;letter-spacing:-0.085px;">Редактировать</span>
<svg class="abs" style="left:1407.6px;top:544.6px;" width="12" height="13" viewBox="0 0 12 13"><path d="M.3 1.5H3.6L4.2 .5H6.8L7.4 1.5H10.7V2.8H.3Z" fill="#dc3545"/><path d="M1 3.6H10L9.5 11.4Q9.4 12.6 8.2 12.6H2.8Q1.6 12.6 1.5 11.4Z" fill="#dc3545"/></svg>
<span class="abs" style="left:1421.80px;top:546.00px;font-size:12.25px;color:#dc3545;letter-spacing:-0.28px;">Удалить</span>
<div class="abs" style="left:368px;top:587px;width:372px;height:154px;background:#fff;border:1px solid #dfe0e2;border-radius:4px"></div>
<div class="abs" style="left:369px;top:697px;width:370px;height:1px;background:#e3e4e5"></div>
<span class="abs" style="left:383.00px;top:604.00px;font-size:14px;color:#212529;letter-spacing:0.08px;">Долг клиента</span>
<div class="abs" style="left:645px;top:601.7px;width:80px;height:19px;background:#0d6efd;border-radius:3.5px"></div>
<span class="abs" style="left:652.00px;top:607.00px;font-size:10.5px;font-weight:700;color:#fff;letter-spacing:0.248px;">Переменная</span>
<span class="abs" style="left:383.00px;top:633.00px;font-size:12.25px;color:#6c757d;letter-spacing:0.123px;">client_debt</span>
<span class="abs" style="left:383.00px;top:665.00px;font-size:14px;color:#212529;letter-spacing:0.098px;">Этап раскрытия: Любой</span>
<div class="abs" style="left:383px;top:705px;width:192px;height:28px;border:1px solid #2f65bd;border-radius:3px 0 0 3px;background:#fff"></div>
<div class="abs" style="left:574px;top:705px;width:151px;height:28px;border:1px solid #ad4351;border-radius:0 3px 3px 0;background:#fff"></div>
<svg class="abs" style="left:427.2px;top:711.8px;" width="15" height="15" viewBox="-1 -1 15 15"><path d="M5.4 1.9H2.6Q.8 1.9 .8 3.7V10.2Q.8 12 2.6 12H9.1Q10.9 12 10.9 10.2V7.6" fill="none" stroke="#0d6efd" stroke-width="1.5" stroke-linecap="round"/><path d="M4.4 8.6L5 6.2L10.5 .7Q11.2 0 11.9 .7L12.2 1Q12.9 1.7 12.2 2.4L6.7 7.9Z" fill="#0d6efd"/></svg>
<span class="abs" style="left:445.20px;top:714.00px;font-size:12.25px;color:#0d6efd;letter-spacing:-0.085px;">Редактировать</span>
<svg class="abs" style="left:619.6px;top:712.6px;" width="12" height="13" viewBox="0 0 12 13"><path d="M.3 1.5H3.6L4.2 .5H6.8L7.4 1.5H10.7V2.8H.3Z" fill="#dc3545"/><path d="M1 3.6H10L9.5 11.4Q9.4 12.6 8.2 12.6H2.8Q1.6 12.6 1.5 11.4Z" fill="#dc3545"/></svg>
<span class="abs" style="left:633.80px;top:714.00px;font-size:12.25px;color:#dc3545;letter-spacing:-0.28px;">Удалить</span>
</body>
</html>
